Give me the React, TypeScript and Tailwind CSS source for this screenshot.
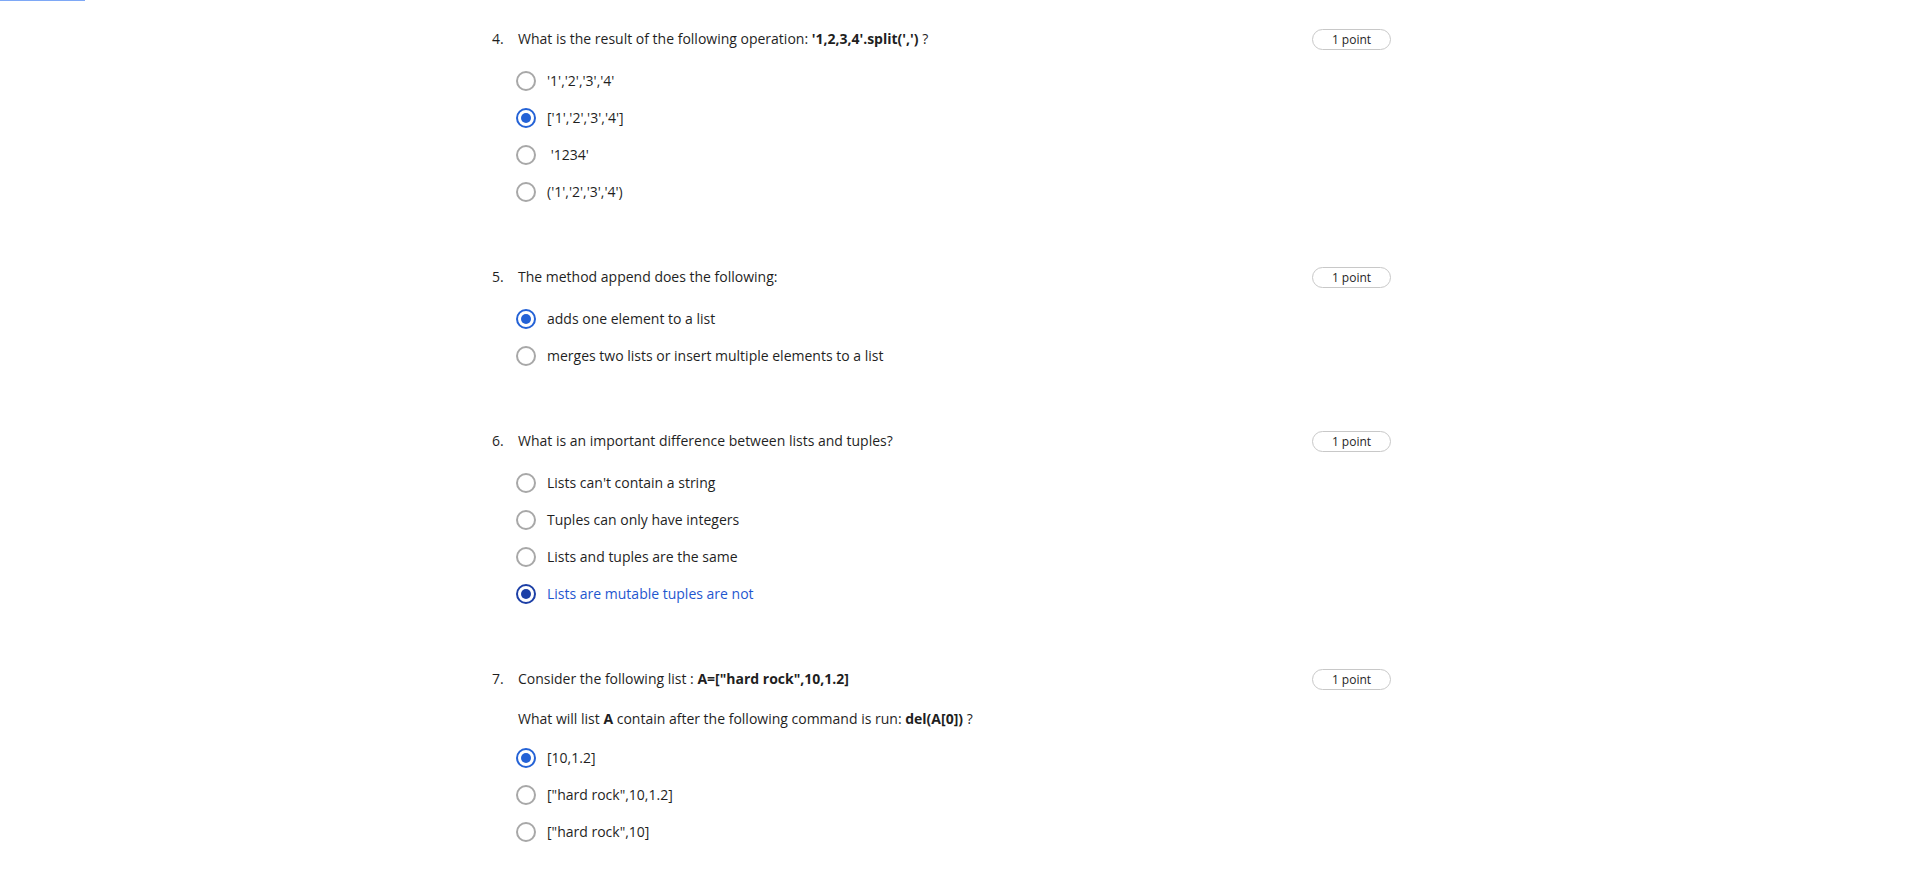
import React from 'react';

type Option = { label: React.ReactNode; selected?: boolean; active?: boolean };

interface QuestionProps {
  num: number;
  title: React.ReactNode;
  sub?: React.ReactNode;
  options: Option[];
}

function Radio({ selected, active }: { selected?: boolean; active?: boolean }) {
  if (selected) {
    return (
      <span
        className={
          'flex h-[20px] w-[20px] shrink-0 items-center justify-center rounded-full border-2 ' +
          (active ? 'border-[#1c3fa6]' : 'border-[#2462d6]')
        }
      >
        <span className={'h-[10px] w-[10px] rounded-full ' + (active ? 'bg-[#1c3fa6]' : 'bg-[#2462d6]')} />
      </span>
    );
  }
  return <span className="h-[20px] w-[20px] shrink-0 rounded-full border-2 border-[#a8a8a8]" />;
}

function Question({ num, title, sub, options }: QuestionProps) {
  return (
    <section>
      <div className="flex items-start">
        <span className="w-[26px] shrink-0 leading-[21px]">{num}.</span>
        <div className="flex-1 leading-[21px]">{title}</div>
        <span className="mt-px flex h-[21px] w-[79px] shrink-0 items-center justify-center rounded-full border border-[#c8c8c8] text-[12px] leading-none">
          1 point
        </span>
      </div>
      {sub && <div className="mt-[18px] pl-[26px] leading-[21px]">{sub}</div>}
      <div className={(sub ? 'mt-[10px]' : 'mt-[12px]') + ' pl-[24px]'}>
        {options.map((o, i) => (
          <div key={i} className="flex h-[37px] items-center gap-[11px]">
            <Radio selected={o.selected} active={o.active} />
            <span className={'whitespace-pre leading-[21px] ' + (o.active ? 'text-[#1f57cf]' : '')}>{o.label}</span>
          </div>
        ))}
      </div>
    </section>
  );
}

export default function App() {
  return (
    <div className="relative min-h-screen bg-white font-['Open_Sans',sans-serif] text-[14px] text-[#1f1f1f]">
      <div className="absolute left-0 top-0 h-px w-[85px] bg-[#7ea8f6]" />
      <div className="ml-[492px] flex w-[899px] flex-col gap-[56px] pt-[28px]">
        <Question
          num={4}
          title={
            <>
              What is the result of the following operation: <b>'1,2,3,4'.split(',')</b> ?
            </>
          }
          options={[
            { label: "'1','2','3','4'" },
            { label: "['1','2','3','4']", selected: true },
            { label: " '1234'" },
            { label: "('1','2','3','4')" },
          ]}
        />
        <Question
          num={5}
          title="The method append does the following:"
          options={[
            { label: 'adds one element to a list', selected: true },
            { label: 'merges two lists or insert multiple elements to a list' },
          ]}
        />
        <Question
          num={6}
          title="What is an important difference between lists and tuples?"
          options={[
            { label: "Lists can't contain a string" },
            { label: 'Tuples can only have integers' },
            { label: 'Lists and tuples are the same' },
            { label: 'Lists are mutable tuples are not', selected: true, active: true },
          ]}
        />
        <Question
          num={7}
          title={
            <>
              Consider the following list : <b>A=["hard rock",10,1.2]</b>
            </>
          }
          sub={
            <>
              What will list <b>A</b> contain after the following command is run: <b>del(A[0])</b> ?
            </>
          }
          options={[
            { label: '[10,1.2]', selected: true },
            { label: '["hard rock",10,1.2]' },
            { label: '["hard rock",10]' },
          ]}
        />
      </div>
    </div>
  );
}
